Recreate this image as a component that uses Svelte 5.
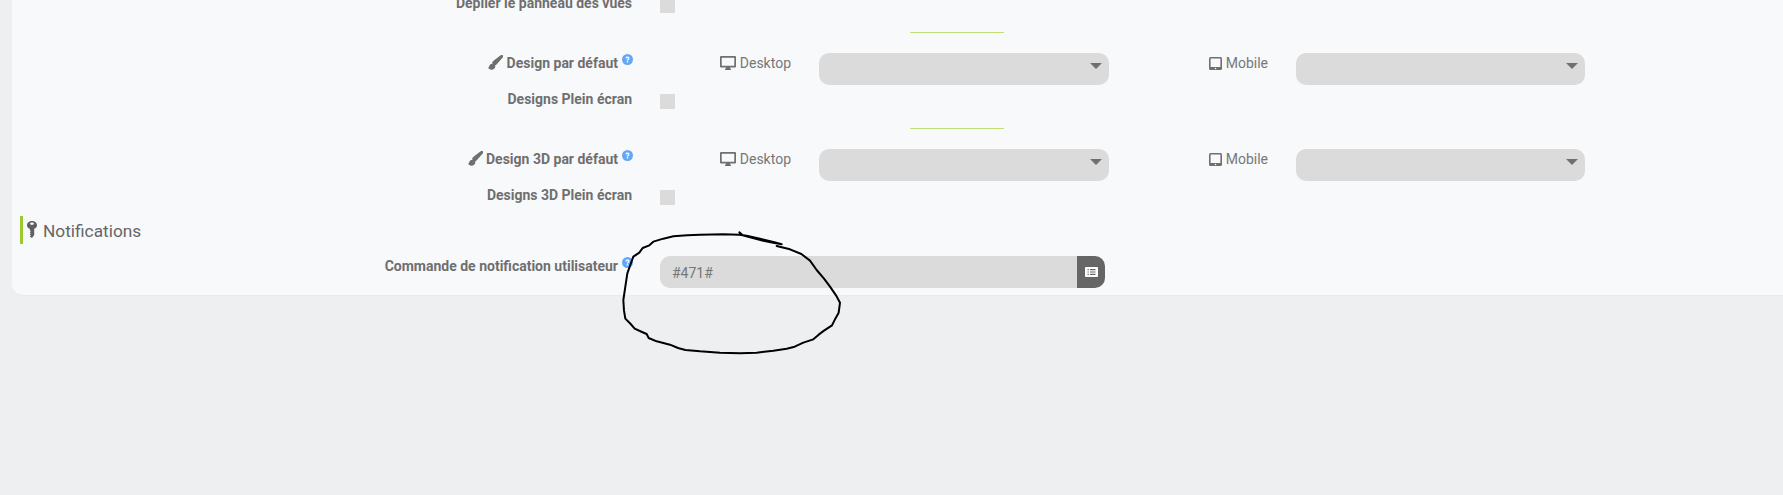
<script>
	const selects = [
		{ label: 'Design par défaut', full: 'Designs Plein écran' },
		{ label: 'Design 3D par défaut', full: 'Designs 3D Plein écran' }
	];

	const circle =
		'M418 37 L428 46 L450 52 L490 62 L520 68 L545 73 L520 66 L480 56 L440 47 L418 44 L370 43 L300 44 L262 46 L220 49 L190 56 L160 65 L148 76 L128 84 L118 98 L100 110 L92 132 L82 160 L76 200 L70 240 L72 272 L76 296 L92 312 L104 326 L126 336 L140 342 L146 354 L170 364 L210 374 L234 384 L256 390 L300 394 L360 398 L420 400 L470 398 L520 392 L560 386 L584 380 L610 368 L640 358 L656 344 L672 332 L696 316 L706 296 L716 278 L720 248 L708 226 L690 200 L672 176 L650 150 L630 122 L604 102 L570 88 L530 78';
</script>

{#snippet help()}
	<svg class="help" viewBox="0 0 12 12" width="11" height="11">
		<circle cx="6" cy="6" r="6" />
		<path d="M3.800 4.700c0-1.200 1-1.900 2.200-1.900s2.200.7 2.200 1.800c0 1.400-1.500 1.400-1.500 2.500H5.200c0-1.700 1.400-1.600 1.400-2.500 0-.3-.3-.5-.6-.5-.4 0-.7.200-.7.700zM5.200 7.700h1.500v1.500H5.200z" fill="#f8f9fb" />
	</svg>
{/snippet}

<div class="page">
	<div class="panel">
		<div class="row">
			<div class="label">Déplier le panneau des vues</div>
			<div class="field"><span class="check"></span></div>
		</div>

		{#each selects as s}
			<hr />
			<div class="row selects">
				<div class="label">
					<svg class="brush" viewBox="0 0 16 16" width="15" height="15">
						<path d="M15.700 .3c-.6-.6-1.700-.4-2.600.3L5.900 6.200c-.8.700-1.300 1.500-1.600 2.400l2.900 2.800c.9-.3 1.800-1 2.400-1.800l6.300-7.200c.6-.8.500-1.600-.2-2.100zM4.600 9.400c-1.800 0-3 1-3.300 2.700-.2 1-.5 1.400-1.300 1.600 1.100 1.800 3.200 2.300 5.100 1.700 1.800-.6 3-2.100 2.600-3.800-.3-1.300-1.500-2.200-3.100-2.200z" />
					</svg>
					{s.label}{@render help()}
				</div>
				<div class="pair">
					<div class="device">
						<svg viewBox="0 0 16 14" width="16" height="14">
							<path fill-rule="evenodd" d="M1 0h14a1 1 0 0 1 1 1v9.500a1 1 0 0 1-1 1H9.800c.1.800.5 1.200 1.200 1.500v1H5v-1c.7-.3 1.100-.7 1.200-1.500H1a1 1 0 0 1-1-1V1a1 1 0 0 1 1-1zM1.700 1.700v8.100h12.600V1.700z" />
						</svg>
						Desktop
					</div>
					<div class="select"><span class="caret"></span></div>
					<div class="device">
						<svg viewBox="0 0 13 13" width="13" height="13">
							<path fill-rule="evenodd" d="M1.500 0h10A1.500 1.500 0 0 1 13 1.500v10a1.500 1.500 0 0 1-1.500 1.500h-10A1.500 1.500 0 0 1 0 11.500v-10A1.500 1.500 0 0 1 1.500 0zM1.600 1.600v8.400h9.800V1.600zM6.500 10.700a.8.8 0 1 0 0 1.600.8.8 0 0 0 0-1.600z" />
						</svg>
						Mobile
					</div>
					<div class="select"><span class="caret"></span></div>
				</div>
			</div>
			<div class="row after">
				<div class="label">{s.full}</div>
				<div class="field"><span class="check"></span></div>
			</div>
		{/each}

		<div class="section">
			<svg viewBox="0 0 10 17" width="10" height="17">
				<path fill-rule="evenodd" d="M5 0c2.800 0 5 1.800 5 4.200 0 1.700-1.100 3-2.800 3.600V14L5 17 2.800 15.400l1-1.100-1-1 1-1-1-1 1-1-1-1.400v-1.100C1.100 7.200 0 5.900 0 4.200 0 1.800 2.200 0 5 0zM5 1.600c-1.100 0-1.900.5-1.900 1.200S3.900 4 5 4s1.900-.5 1.900-1.200S6.100 1.600 5 1.600z" />
			</svg>
			<span>Notifications</span>
		</div>

		<div class="row">
			<div class="label command">Commande de notification utilisateur{@render help()}</div>
			<div class="input-group">
				<div class="input">#471#</div>
				<div class="addon">
					<svg viewBox="0 0 13 10" width="13" height="10">
						<path fill-rule="evenodd" d="M1 0h11a1 1 0 0 1 1 1v8a1 1 0 0 1-1 1H1a1 1 0 0 1-1-1V1a1 1 0 0 1 1-1zM2.500 2v1.200h1.300V2zM5 2v1.200h5.500V2zM2.500 4.400v1.200h1.300V4.400zM5 4.400v1.200h5.500V4.400zM2.500 6.800V8h1.300V6.800zM5 6.800V8h5.500V6.800z" />
					</svg>
				</div>
			</div>
		</div>
	</div>

	<!-- pen mark drawn over the screenshot -->
	<svg class="scribble" viewBox="0 0 780 420" width="260" height="140">
		<path d={circle} />
	</svg>
</div>

<style>
	:global(body) {
		margin: 0;
		background: #eeeff1;
	}

	.page {
		position: relative;
		height: 495px;
		overflow: hidden;
		padding-left: 12px;
		font-family: Roboto, 'Liberation Sans', sans-serif;
		font-size: 14px;
		color: #767676;
	}

	.panel {
		margin-top: -2px;
		padding-bottom: 7px;
		background: #f8f9fb;
		border-radius: 0 0 0 10px;
		box-shadow: 0 1px 0 #e9eaec;
	}

	.row {
		display: grid;
		grid-template-columns: 620px 1fr;
		column-gap: 28px;
	}

	.row.after {
		margin-top: 9px;
	}

	.label {
		text-align: right;
		font-weight: 700;
		line-height: 15px;
		color: #6f6f6f;
		margin-top: -2px;
	}

	.selects .label {
		margin-top: 2px;
	}

	.label.command {
		margin-top: 3px;
	}

	.label .brush {
		fill: #6f6f6f;
		vertical-align: -2px;
	}

	.help {
		fill: #62a8f8;
		vertical-align: top;
		margin: -1px -1px 0 4px;
	}

	.command .help {
		margin-top: -2px;
	}

	.field {
		height: 15px;
	}

	.check {
		display: block;
		width: 15px;
		height: 15px;
		background: #dbdbdb;
	}

	hr {
		width: 94px;
		height: 1px;
		margin: 19px 0 20px 898px;
		border: 0;
		background: #c2de76;
	}

	.pair {
		display: grid;
		grid-template-columns: 131px 290px 131px 289px;
		column-gap: 28px;
	}

	.device {
		padding-top: 3px;
		line-height: 15px;
		text-align: right;
		color: #777;
	}

	.device svg {
		fill: #6f6f6f;
		vertical-align: -2px;
	}

	.select {
		position: relative;
		height: 32px;
		border-radius: 10px;
		background: #dbdbdb;
	}

	.caret {
		position: absolute;
		right: 7px;
		top: 10px;
		border-style: solid;
		border-width: 6px 6px 0;
		border-color: #707070 transparent transparent;
	}

	.section {
		display: flex;
		align-items: center;
		gap: 6px;
		height: 28px;
		margin: 11px 0 12px 8px;
		padding-left: 4px;
		border-left: 3px solid #9bc92f;
		font-size: 17.3px;
		color: #666;
	}

	.section span {
		margin-top: 1px;
	}

	.section svg {
		fill: #606060;
		margin-top: -1px;
	}

	.input-group {
		display: flex;
		width: 445px;
		height: 32px;
		border-radius: 10px;
		overflow: hidden;
	}

	.input {
		flex: 1;
		padding-left: 12px;
		line-height: 34px;
		background: #dbdbdb;
		color: #777;
	}

	.addon {
		display: flex;
		align-items: center;
		justify-content: center;
		width: 28px;
		background: #666;
	}

	.addon svg {
		fill: #fff;
	}

	.scribble {
		position: absolute;
		left: 600px;
		top: 220px;
		fill: none;
		stroke: #000;
		stroke-width: 6;
		stroke-linejoin: round;
		stroke-linecap: round;
	}
</style>
